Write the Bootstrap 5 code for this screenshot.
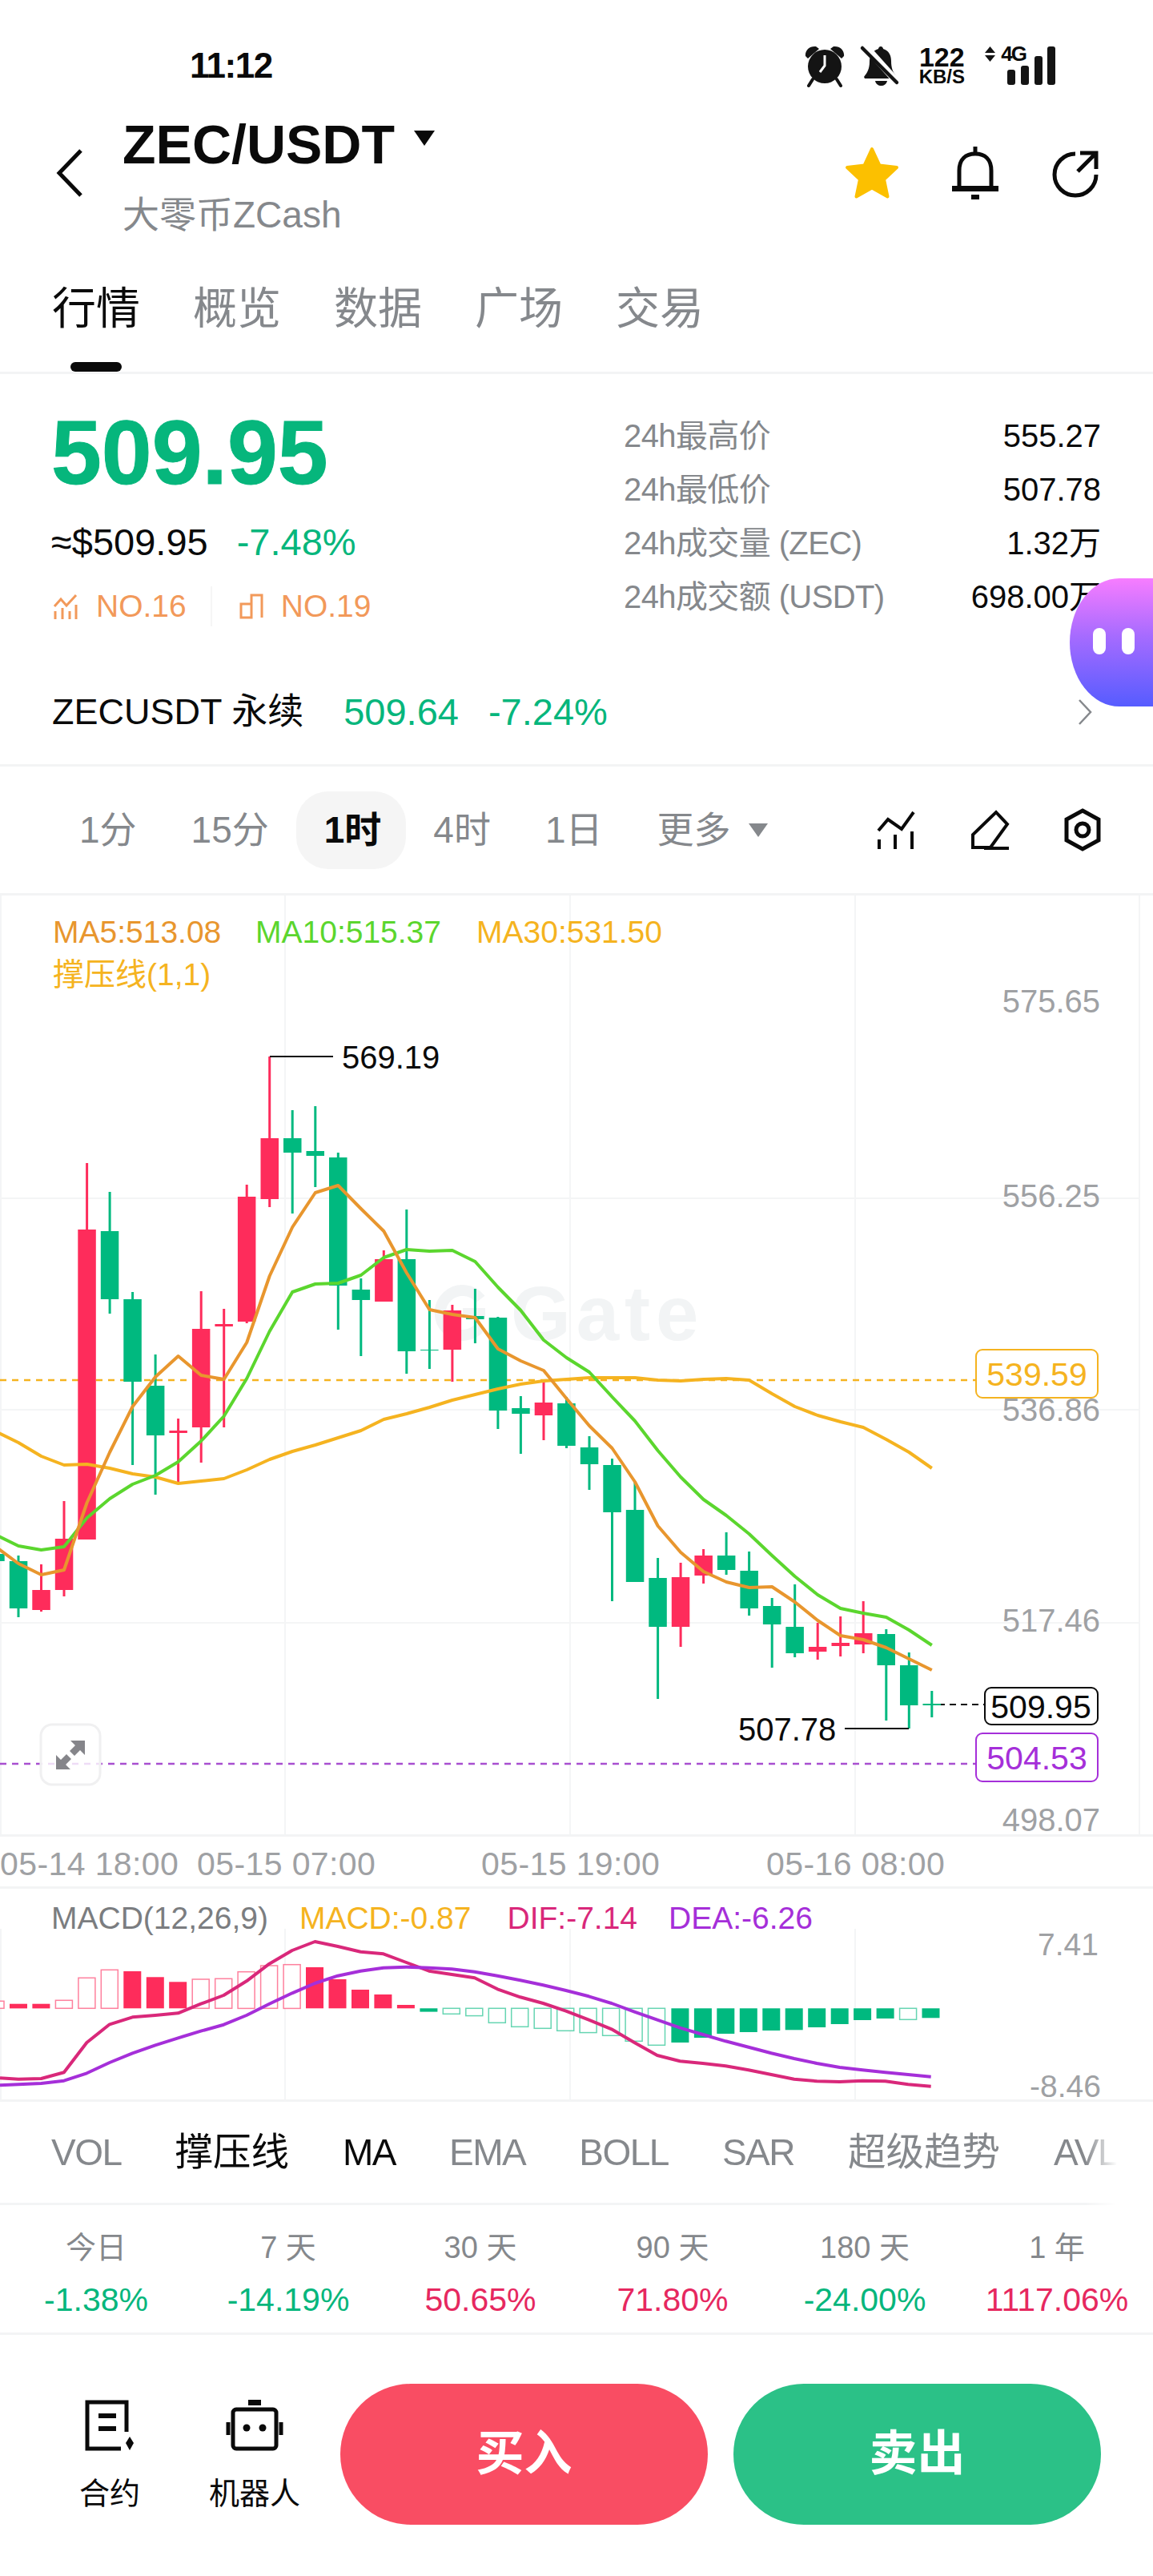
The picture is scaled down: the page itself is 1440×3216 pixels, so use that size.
<!DOCTYPE html>
<html lang="zh-CN">
<head>
    <meta charset="UTF-8">
    <meta name="viewport" content="width=device-width, initial-scale=1.0">
    <title>ZEC/USDT</title>
    <link href="https://cdn.jsdelivr.net/npm/bootstrap@5.3.0/dist/css/bootstrap.min.css" rel="stylesheet">
    <style>
        body {
            background: #fff;
            color: #0a0a0a;
            font-family: "Liberation Sans", "Noto Sans CJK SC", sans-serif;
        }
        svg { display: block; overflow: visible; }
        svg text { font-family: "Liberation Sans", "Noto Sans CJK SC", sans-serif; }
        .screen { width: 1440px; height: 3216px; overflow: hidden; position: relative; }
        .hair { border-bottom: 3px solid #f3f4f5; }
        .t-grey { color: #85888c; }
        .t-up { color: #e6285f; }
        .t-down { color: #06b67c; }

        .status-strip { height: 130px; padding: 34px 122px 0 237px; }
        .status-time { font-size: 44px; font-weight: 700; letter-spacing: -1.5px; }
        .bell-off { margin-left: 21px; }
        .status-speed { width: 60px; font-weight: 700; text-align: center; margin: 0 24px 0 24px; }
        .speed-num { font-size: 34px; line-height: 28px; }
        .speed-unit { font-size: 24px; line-height: 22px; }
        .status-net { font-size: 26px; font-weight: 700; letter-spacing: -2px; line-height: 19px; margin-right: -23px; margin-top: 2px; gap: 7px; align-self: flex-start; }

        .head-strip { height: 176px; padding: 0 67px 0 70px; }
        .head-back { margin-top: 56px; }
        .head-titles { margin-left: 49px; }
        .pair-title { font-size: 68px; font-weight: 700; line-height: 100px; }
        .pair-sub { font-size: 46px; line-height: 76px; }
        .head-tools { margin-top: 53px; gap: 66px; }
        .share-ico { margin-top: 4px; }

        .tab-row { height: 161px; padding: 44px 0 0 65px; gap: 66px; }
        .tab-row .nav-link { padding: 0; font-size: 55px; line-height: 70px; color: #85888c; }
        .tab-row .nav-link.active { color: #0a0a0a; }
        .tab-mark { width: 64px; height: 12px; border-radius: 6px; background: #0a0a0a; margin: 32px auto 0; }

        .quote-strip { height: 357px; padding: 40px 65px 0 64px; }
        .big-price { font-size: 113px; font-weight: 700; line-height: 116px; color: #06b67c; -webkit-text-stroke: 1px #06b67c; }
        .usd-line { font-size: 47px; line-height: 60px; margin-top: 24px; gap: 36px; }
        .rank-line { font-size: 39px; line-height: 50px; margin-top: 25px; color: #f2995a; padding-left: 2px; }
        .rank-sep { width: 2px; height: 50px; background: #f6f6f6; margin: 0 34px 0 30px; }
        .rank-ico { margin-right: 22px; }
        .stat-col { width: 596px; padding-top: 3px; }
        .stat-row { height: 67px; font-size: 40px; }
        .stat-row .t-grey { letter-spacing: -.6px; }

        .perp-strip { height: 133px; padding: 0 76px 0 65px; font-size: 45px; }
        .perp-num { font-size: 47px; margin-left: 37px; }
        .perp-num.first { margin-left: 50px; }

        .tf-strip { height: 161px; padding: 0 65px; }
        .tf-item { padding: 0 34px; height: 97px; line-height: 97px; font-size: 46px; color: #85888c; border-radius: 40px; }
        .tf-item.active { background: #f5f5f5; color: #0a0a0a; font-weight: 700; padding: 0 31px 0 35px; }
        .tf-caret { width: 0; height: 0; border-left: 12px solid transparent; border-right: 12px solid transparent; border-top: 17px solid #85888c; margin-left: -12px; }
        .tf-tools { gap: 68px; }

        .date-row { height: 65px; font-size: 41px; letter-spacing: .4px; color: #9fa1a4; position: relative; }
        .date-label { position: absolute; top: 9px; line-height: 50px; white-space: nowrap; }
        .date-label.d1 { left: 0; }
        .date-label.d2 { left: 246px; }
        .date-label.d3 { left: 601px; }
        .date-label.d4 { left: 957px; }

        .macd-legend { height: 50px; margin: 12px 0 -12px; padding-left: 64px; gap: 39px; font-size: 39px; line-height: 50px; position: relative; z-index: 1; }
        .macd-legend .far { margin-left: 6px; }
        .macd-name { color: #7b7d80; }
        .macd-m { color: #f5b320; }
        .macd-dif { color: #d9287a; }
        .macd-dea { color: #a52fd9; }

        .ind-row { height: 129px; padding: 28px 0 0 64px; gap: 67px; font-size: 46px; letter-spacing: -1.5px; line-height: 70px; white-space: nowrap; overflow: hidden; color: #85888c;
            -webkit-mask-image: linear-gradient(to right, #000 1355px, transparent 1395px);
            mask-image: linear-gradient(to right, #000 1355px, transparent 1395px); }
        .ind-row .on { color: #0a0a0a; }
        .ind-row .cjk { font-size: 47.500px; letter-spacing: 0; }

        .ret-row { height: 162px; padding-top: 27px; }
        .ret-label { font-size: 38px; line-height: 52px; }
        .ret-value { font-size: 41px; line-height: 50px; margin-top: 14px; }

        .action-bar { padding: 61px 65px 0 99px; }
        .tool-item { font-size: 38px; line-height: 50px; text-align: center; padding-top: 20px; }
        .tool-item svg { margin: 0 auto 28px; }
        .tool-a { width: 76px; margin-right: 84px; }
        .tool-b { width: 118px; }
        .trade-btn { width: 459px; height: 176px; border: 0; border-radius: 88px; color: #fff; font-size: 60px; font-weight: 700; }
        .trade-btn.buy { background: #f94d63; margin-left: 48px; margin-right: 32px; }
        .trade-btn.sell { background: #2bc187; }
        .trade-btn.buy:hover { background: #f94d63; color: #fff; }
        .trade-btn.sell:hover { background: #2bc187; color: #fff; }

        .ai-float { position: absolute; left: 1336px; top: 722px; width: 130px; height: 160px; border-radius: 62px 0 0 62px / 80px 0 0 80px; background: linear-gradient(180deg, #f77dff 0%, #a66bff 45%, #565cff 100%); }
        .ai-eye { position: absolute; top: 62px; width: 16px; height: 33px; border-radius: 8px; background: #fff; }
        .ai-eye.l { left: 29px; }
        .ai-eye.r { left: 65px; }
    </style>
</head>
<body>
<div class="screen">

    <!-- status bar -->
    <div class="status-strip d-flex align-items-center">
        <div class="status-time">11:12</div>
        <div class="ms-auto d-flex align-items-center">
            <svg width="50" height="52" viewBox="0 0 50 52">
                <path d="M1 14C0 7 6 1 14 2L18 5 4 17zM49 14C50 7 44 1 36 2L32 5 46 17z" fill="#141414"/>
                <circle cx="25" cy="27" r="21" fill="#141414"/>
                <path d="M10 43l-5 8M40 43l5 8" stroke="#141414" stroke-width="4" stroke-linecap="round"/>
                <path d="M25 13v13l-6 8" stroke="#fff" stroke-width="3" fill="none"/>
            </svg>
            <svg class="bell-off" width="46" height="50" viewBox="0 0 46 50">
                <path d="M24 1c2 0 3 2 3 3 7 2 10 8 10 15 0 9 2 14 7 20l-2 2H4l-1-2c4-5 7-10 7-19 0-8 4-14 11-16 0-1 1-3 3-3z" fill="#141414"/>
                <path d="M17 44h15c-1 4-4 6-7.500 6S18 48 17 44z" fill="#141414"/>
                <path d="M2-2L46 47" stroke="#fff" stroke-width="9"/>
                <path d="M1 3l43 43" stroke="#141414" stroke-width="4.500" stroke-linecap="round"/>
            </svg>
            <div class="status-speed">
                <div class="speed-num">122</div>
                <div class="speed-unit">KB/S</div>
            </div>
            <div class="status-net d-flex">
                <svg width="13" height="19" viewBox="0 0 13 19"><path d="M6.500 0L13 8H0zM0 11h13l-6.500 8z" fill="#141414"/></svg>
                <span>4G</span>
            </div>
            <svg width="60" height="48" viewBox="0 0 60 48" fill="#141414">
                <rect x="0" y="29" width="10" height="19" rx="3"/>
                <rect x="17" y="24" width="10" height="24" rx="3"/>
                <rect x="34" y="12" width="10" height="36" rx="3"/>
                <rect x="50" y="0" width="10" height="48" rx="3"/>
            </svg>
        </div>
    </div>

    <!-- pair header -->
    <div class="head-strip d-flex align-items-start">
        <svg class="head-back flex-shrink-0" width="34" height="60" viewBox="0 0 34 60">
            <path d="M31 2L4 30l27 28" fill="none" stroke="#0a0a0a" stroke-width="5"/>
        </svg>
        <div class="head-titles">
            <div class="d-flex align-items-center">
                <div class="pair-title">ZEC/USDT</div>
                <svg class="ms-4 mb-3" width="26" height="19" viewBox="0 0 26 19"><path d="M0 0h26L13 19z" fill="#0a0a0a"/></svg>
            </div>
            <div class="pair-sub t-grey">大零币ZCash</div>
        </div>
        <div class="head-tools ms-auto d-flex">
            <svg width="68" height="65" viewBox="0 0 68 65">
                <path d="M34 3l9.500 20.500L65 26 49 41l4.500 21.500L34 51.500 14.500 62.500 19 41 3 26l21.500-2.500z" fill="#fcc000" stroke="#fcc000" stroke-width="4" stroke-linejoin="round"/>
            </svg>
            <svg width="58" height="66" viewBox="0 0 58 66">
                <path d="M29 0v9" stroke="#0a0a0a" stroke-width="5"/>
                <path d="M9 52V30C9 16 17 9 29 9s20 7 20 21v22" fill="none" stroke="#0a0a0a" stroke-width="5"/>
                <rect x="0" y="49" width="58" height="7" fill="#0a0a0a"/>
                <rect x="24" y="60" width="10" height="6" fill="#0a0a0a"/>
            </svg>
            <svg class="share-ico" width="60" height="60" viewBox="0 0 60 60">
                <path d="M30 5A26 26 0 1 0 56 31" fill="none" stroke="#0a0a0a" stroke-width="5"/>
                <path d="M36 4h20v20M56 4L33 27" fill="none" stroke="#0a0a0a" stroke-width="5"/>
            </svg>
        </div>
    </div>

    <!-- tabs -->
    <ul class="nav tab-row hair">
        <li class="nav-item"><a class="nav-link active" href="#">行情</a><div class="tab-mark"></div></li>
        <li class="nav-item"><a class="nav-link" href="#">概览</a></li>
        <li class="nav-item"><a class="nav-link" href="#">数据</a></li>
        <li class="nav-item"><a class="nav-link" href="#">广场</a></li>
        <li class="nav-item"><a class="nav-link" href="#">交易</a></li>
    </ul>

    <!-- price block -->
    <div class="quote-strip d-flex justify-content-between">
        <div>
            <div class="big-price">509.95</div>
            <div class="usd-line d-flex"><span>≈$509.95</span><span class="t-down">-7.48%</span></div>
            <div class="rank-line d-flex align-items-center">
                <svg class="rank-ico" width="32" height="32" viewBox="0 0 32 32" fill="none" stroke="#f2995a" stroke-width="3">
                    <path d="M2 16l8-9 7 8 12-13"/><path d="M3 22v10M12 18v14M21 22v10M29 14v18"/>
                </svg>
                <span>NO.16</span>
                <div class="rank-sep"></div>
                <svg class="rank-ico" width="30" height="32" viewBox="0 0 30 32" fill="none" stroke="#f2995a" stroke-width="3">
                    <path d="M2 30V13h13v17zM15 30V2h13v28"/>
                </svg>
                <span>NO.19</span>
            </div>
        </div>
        <div class="stat-col">
            <div class="stat-row d-flex justify-content-between align-items-center"><span class="t-grey">24h最高价</span><span>555.27</span></div>
            <div class="stat-row d-flex justify-content-between align-items-center"><span class="t-grey">24h最低价</span><span>507.78</span></div>
            <div class="stat-row d-flex justify-content-between align-items-center"><span class="t-grey">24h成交量 (ZEC)</span><span>1.32万</span></div>
            <div class="stat-row d-flex justify-content-between align-items-center"><span class="t-grey">24h成交额 (USDT)</span><span>698.00万</span></div>
        </div>
    </div>

    <!-- perpetual row -->
    <div class="perp-strip hair d-flex align-items-center">
        <span>ZECUSDT 永续</span>
        <span class="perp-num first t-down">509.64</span>
        <span class="perp-num t-down">-7.24%</span>
        <svg class="ms-auto" width="18" height="32" viewBox="0 0 18 32"><path d="M2 1l14 15L2 31" fill="none" stroke="#85888c" stroke-width="2.500"/></svg>
    </div>

    <!-- timeframe row -->
    <div class="tf-strip hair d-flex align-items-center">
        <div class="tf-item">1分</div>
        <div class="tf-item">15分</div>
        <div class="tf-item active">1时</div>
        <div class="tf-item">4时</div>
        <div class="tf-item">1日</div>
        <div class="tf-item">更多</div>
        <div class="tf-caret"></div>
        <div class="tf-tools ms-auto d-flex align-items-center">
            <svg width="48" height="50" viewBox="0 0 48 50" fill="none" stroke="#0a0a0a" stroke-width="4">
                <path d="M2 26l12-14 17 12L46 3"/><path d="M3 37v12M23 31v18M44 27v22"/>
            </svg>
            <svg width="50" height="50" viewBox="0 0 50 50" fill="none" stroke="#0a0a0a" stroke-width="4">
                <path d="M33 3l14 15-21 29H4V31z"/><path d="M18 48h31"/>
            </svg>
            <svg width="46" height="54" viewBox="0 0 46 54" fill="none" stroke="#0a0a0a" stroke-width="5">
                <path d="M23 3l20 11v26L23 51 3 40V14z"/><circle cx="23" cy="27" r="8"/>
            </svg>
        </div>
    </div>

    <!-- candles -->
    <div class="hair"><svg id="klineChart" width="1440" height="1172" viewBox="0 1118 1440 1172"></svg></div>

    <div class="date-row hair">
        <span class="date-label d1">05-14 18:00</span>
        <span class="date-label d2">05-15 07:00</span>
        <span class="date-label d3">05-15 19:00</span>
        <span class="date-label d4">05-16 08:00</span>
    </div>

    <!-- macd -->
    <div class="macd-legend d-flex">
        <span class="macd-name">MACD(12,26,9)</span>
        <span class="macd-m">MACD:-0.87</span>
        <span class="macd-dif far">DIF:-7.14</span>
        <span class="macd-dea">DEA:-6.26</span>
    </div>
    <div class="hair"><svg id="macdChart" width="1440" height="213" viewBox="0 2408 1440 213"></svg></div>

    <!-- indicators -->
    <div class="ind-row hair d-flex">
        <span>VOL</span><span class="on cjk">撑压线</span><span class="on">MA</span><span>EMA</span><span>BOLL</span><span>SAR</span><span class="cjk">超级趋势</span><span>AVL</span>
    </div>

    <!-- returns -->
    <div class="ret-row hair row g-0 text-center">
        <div class="col-2"><div class="ret-label t-grey">今日</div><div class="ret-value t-down">-1.38%</div></div>
        <div class="col-2"><div class="ret-label t-grey">7 天</div><div class="ret-value t-down">-14.19%</div></div>
        <div class="col-2"><div class="ret-label t-grey">30 天</div><div class="ret-value t-up">50.65%</div></div>
        <div class="col-2"><div class="ret-label t-grey">90 天</div><div class="ret-value t-up">71.80%</div></div>
        <div class="col-2"><div class="ret-label t-grey">180 天</div><div class="ret-value t-down">-24.00%</div></div>
        <div class="col-2"><div class="ret-label t-grey">1 年</div><div class="ret-value t-up">1117.06%</div></div>
    </div>

    <!-- bottom actions -->
    <div class="action-bar d-flex align-items-start">
        <div class="tool-item tool-a">
            <svg width="62" height="64" viewBox="0 0 62 64" fill="none" stroke="#0a0a0a">
                <path d="M52 40V3H3v58h42" stroke-width="5"/>
                <path d="M17 20h22M17 36h22" stroke-width="6"/>
                <path d="M56 46l5 8-5 9-5-9z" fill="#0a0a0a" stroke="none"/>
            </svg>
            <div>合约</div>
        </div>
        <div class="tool-item tool-b">
            <svg width="70" height="64" viewBox="0 0 70 64" fill="none" stroke="#0a0a0a">
                <rect x="27" y="0" width="16" height="7" fill="#0a0a0a" stroke="none"/>
                <rect x="8" y="12" width="54" height="49" rx="4" stroke-width="5"/>
                <path d="M2 28v16M68 28v16" stroke-width="5"/>
                <circle cx="25" cy="35" r="4.500" fill="#0a0a0a" stroke="none"/>
                <circle cx="45" cy="35" r="4.500" fill="#0a0a0a" stroke="none"/>
            </svg>
            <div>机器人</div>
        </div>
        <button type="button" class="btn trade-btn buy">买入</button>
        <button type="button" class="btn trade-btn sell">卖出</button>
    </div>

    <div class="ai-float"><div class="ai-eye l"></div><div class="ai-eye r"></div></div>
</div>

<script src="https://cdn.jsdelivr.net/npm/bootstrap@5.3.0/dist/js/bootstrap.bundle.min.js"></script>
<script>
    const UP = '#fe2c5b', DOWN = '#00b97f';
    const cx = i => 23 + 28.52 * i;

    // [up?, wick top, body top, body bottom, wick bottom], starts at the half hidden candle
    const candles = [
        [0,1938,1940,1949,1950],[0,1942,1949,2008,2019],[1,1953,1985,2010,2012],[1,1874,1921,1985,1993],
        [1,1452,1535,1922,1922],[0,1488,1537,1622,1640],[0,1613,1622,1725,1829],[0,1691,1730,1792,1866],
        [1,1771,1786,1789,1852],[1,1612,1659,1782,1826],[1,1634,1653,1656,1782],[1,1479,1494,1650,1652],
        [1,1319,1421,1497,1507],[0,1386,1421,1439,1515],[0,1381,1437,1443,1482],[0,1439,1445,1605,1660],
        [0,1596,1610,1623,1693],[1,1561,1572,1625,1625],[0,1510,1572,1687,1715],[0,1623,1685,1686,1709],
        [1,1629,1636,1685,1725],[0,1609,1643,1647,1677],[0,1644,1645,1761,1784],[0,1743,1758,1765,1815],
        [1,1725,1751,1767,1798],[0,1744,1752,1805,1808],[0,1793,1807,1828,1860],[0,1821,1829,1888,1999],
        [0,1850,1885,1975,1975],[0,1945,1970,2031,2121],[1,1951,1969,2031,2056],[1,1934,1942,1967,1977],
        [0,1913,1942,1960,1966],[0,1937,1961,2008,2017],[0,1995,2005,2028,2082],[0,1978,2031,2064,2069],
        [1,2026,2056,2062,2072],[1,2018,2051,2055,2068],[1,1999,2039,2053,2064],[0,2034,2040,2079,2148],
        [0,2063,2079,2129,2158],[0,2111,2127,2129,2144]
    ];
    const ma5 = [1931,1952,1966,1960,1876,1813,1756,1719,1693,1717,1722,1676,1593,1532,1489,1480,1509,1537,1589,1635,1641,1645,1684,1699,1711,1746,1780,1808,1850,1905,1938,1962,1975,1982,1981,2000,2023,2042,2047,2057,2071,2085];
    const ma10 = [1916,1930,1935,1931,1895,1871,1853,1842,1825,1799,1768,1721,1662,1613,1603,1602,1592,1570,1560,1562,1561,1575,1607,1636,1673,1695,1713,1744,1774,1811,1844,1872,1892,1915,1942,1968,1991,2008,2014,2019,2035,2054];
    const ma30 = [1787,1801,1818,1829,1828,1833,1840,1844,1852,1849,1846,1835,1822,1812,1804,1795,1786,1772,1765,1757,1748,1741,1734,1728,1724,1722,1720,1720,1720,1723,1724,1722,1721,1723,1740,1756,1767,1775,1782,1797,1813,1833];

    function lineOf(ys, color, width) {
        const pts = ys.map((y, i) => cx(i - 1).toFixed(1) + ',' + y).join(' ');
        return `<polyline points="${pts}" fill="none" stroke="${color}" stroke-width="${width}" stroke-linejoin="round"/>`;
    }
    function label(x, y, txt, color, size, anchor) {
        return `<text x="${x}" y="${y}" fill="${color}" font-size="${size}" text-anchor="${anchor || 'start'}">${txt}</text>`;
    }

    let k = '';
    // grid
    [1, 356, 712, 1068, 1423].forEach(x => { k += `<line x1="${x}" y1="1118" x2="${x}" y2="2290" stroke="#f4f5f6" stroke-width="2"/>`; });
    [1496, 1760, 2026].forEach(y => { k += `<line x1="0" y1="${y}" x2="1423" y2="${y}" stroke="#f4f5f6" stroke-width="2"/>`; });
    // watermark
    k += '<path d="M600 1622a28 28 0 1 0 0 34" fill="none" stroke="#f2f4f5" stroke-width="14"/><path d="M578 1639h28" stroke="#f2f4f5" stroke-width="12"/>';
    k += '<text x="638" y="1673" fill="#f2f4f5" font-size="96" font-weight="700" letter-spacing="7">Gate</text>';
    // legend
    k += label(66, 1177, 'MA5:513.08', '#e8962e', 39);
    k += label(319, 1177, 'MA10:515.37', '#5bd62e', 39);
    k += label(595, 1177, 'MA30:531.50', '#f5b320', 39);
    k += label(66, 1230, '撑压线(1,1)', '#f5b320', 39);
    // dashed levels
    k += '<line x1="0" y1="1723" x2="1218" y2="1723" stroke="#f5b320" stroke-width="2.500" stroke-dasharray="8 7"/>';
    k += '<line x1="0" y1="2202" x2="1218" y2="2202" stroke="#a84fd0" stroke-width="2.500" stroke-dasharray="8 7"/>';
    k += '<line x1="1172" y1="2128" x2="1229" y2="2128" stroke="#0a0a0a" stroke-width="2" stroke-dasharray="8 6"/>';
    // candles
    candles.forEach((c, n) => {
        const x = cx(n - 1), col = c[0] ? UP : DOWN;
        k += `<rect x="${(x - 1.5).toFixed(1)}" y="${c[1]}" width="3" height="${c[4] - c[1]}" fill="${col}"/>`;
        k += `<rect x="${(x - 11.25).toFixed(1)}" y="${c[2]}" width="22.500" height="${c[3] - c[2]}" fill="${col}"/>`;
    });
    k += lineOf(ma30, '#f5b320', 4) + lineOf(ma10, '#5bd62e', 4) + lineOf(ma5, '#e8962e', 4);
    // high / low marks
    k += '<path d="M337 1319H416M1055 2158H1135" stroke="#0a0a0a" stroke-width="2" fill="none"/>';
    k += label(427, 1334, '569.19', '#0a0a0a', 40);
    k += label(922, 2173, '507.78', '#0a0a0a', 40);
    // price axis
    [[1250, '575.65'], [1493, '556.25'], [1760, '536.86'], [2023, '517.46'], [2272, '498.07']].forEach(a => {
        k += label(1374, a[0] + 14, a[1], '#9fa1a4', 40, 'end');
    });
    // price tags
    k += '<rect x="1219" y="1685" width="152" height="60" rx="8" fill="#fff" stroke="#f5b320" stroke-width="2"/>' + label(1295, 1730, '539.59', '#f5b320', 41, 'middle');
    k += '<rect x="1230" y="2107" width="141" height="46" rx="8" fill="#fff" stroke="#0a0a0a" stroke-width="2"/>' + label(1300, 2145, '509.95', '#0a0a0a', 41, 'middle');
    k += '<rect x="1219" y="2164" width="152" height="60" rx="8" fill="#fff" stroke="#a52fd9" stroke-width="2"/>' + label(1295, 2209, '504.53', '#a52fd9', 41, 'middle');
    // expand button
    k += '<rect x="51" y="2153" width="74" height="75" rx="14" fill="#fff" fill-opacity=".8" stroke="#f0f0f1" stroke-width="3"/>';
    k += '<path d="M106 2173v18l-6-6-7 7-6-6 7-7-6-6zM70 2209v-18l6 6 7-7 6 6-7 7 6 6z" fill="#85858a"/>';
    document.getElementById('klineChart').innerHTML = k;

    // macd values are read off in screenshot px: x/1.089, 2300 + y/3
    const mx = v => (v / 1.089).toFixed(1), my = v => (2300 + v / 3).toFixed(1);
    const ZERO = 622;
    const hist = [[-6,595,0],[25,605,1],[56,605,1],[87,592,0],[118,508,0],[149,478,0],[180,483,1],[211,505,1],[242,523,1],[273,513,0],[304,511,0],[335,485,0],[366,462,0],[397,458,0],[428,468,1],[459,513,1],[490,552,1],[521,570,1],[552,609,1],
        [583,635,1],[614,643,0],[645,650,0],[676,676,0],[707,691,0],[738,697,0],[769,706,0],[800,713,0],[831,724,0],[862,745,0],[893,760,0],[925,750,1],[956,732,1],[987,717,1],[1018,711,1],[1049,705,1],[1080,703,1],[1111,693,1],[1142,681,1],[1173,666,1],[1204,660,1],[1235,664,0],[1266,658,1]];
    const dif = [883,887,885,862,750,682,655,648,640,605,573,520,455,405,372,390,410,418,450,482,495,508,550,580,603,632,665,700,750,798,820,828,838,853,870,887,895,897,893,895,907,914];
    const dea = [910,907,903,893,865,825,790,760,733,707,683,648,605,565,528,500,482,470,467,470,475,485,500,517,535,555,577,603,635,665,695,720,745,767,790,810,828,843,853,862,870,878];

    let m = '';
    [1, 356, 712, 1068].forEach(x => { m += `<line x1="${x}" y1="2408" x2="${x}" y2="2621" stroke="#f4f5f6" stroke-width="2"/>`; });
    hist.forEach(h => {
        const up = h[1] < ZERO, col = up ? UP : DOWN;
        const top = up ? h[1] : ZERO, bot = up ? ZERO : h[1];
        const y = +my(top), hgt = (bot - top) / 3, x = +mx(h[0]);
        if (h[2]) m += `<rect x="${(x - 11).toFixed(1)}" y="${y}" width="22" height="${hgt.toFixed(1)}" fill="${col}"/>`;
        else m += `<rect x="${(x - 10.5).toFixed(1)}" y="${y}" width="21" height="${hgt.toFixed(1)}" fill="#fff" stroke="${col}" stroke-opacity=".6" stroke-width="1.500"/>`;
    });
    const macdLine = (vals, col) => {
        const pts = vals.map((v, i) => (i === 0 ? '0' : mx(25 + 31.03 * (i - 1))) + ',' + my(v)).join(' ');
        return `<polyline points="${pts}" fill="none" stroke="${col}" stroke-width="4" stroke-linejoin="round"/>`;
    };
    m += macdLine(dif, '#d9287a') + macdLine(dea, '#a52fd9');
    m += label(1372, 2441, '7.41', '#9fa1a4', 39, 'end');
    m += label(1375, 2618, '-8.46', '#9fa1a4', 39, 'end');
    document.getElementById('macdChart').innerHTML = m;
</script>
</body>
</html>
